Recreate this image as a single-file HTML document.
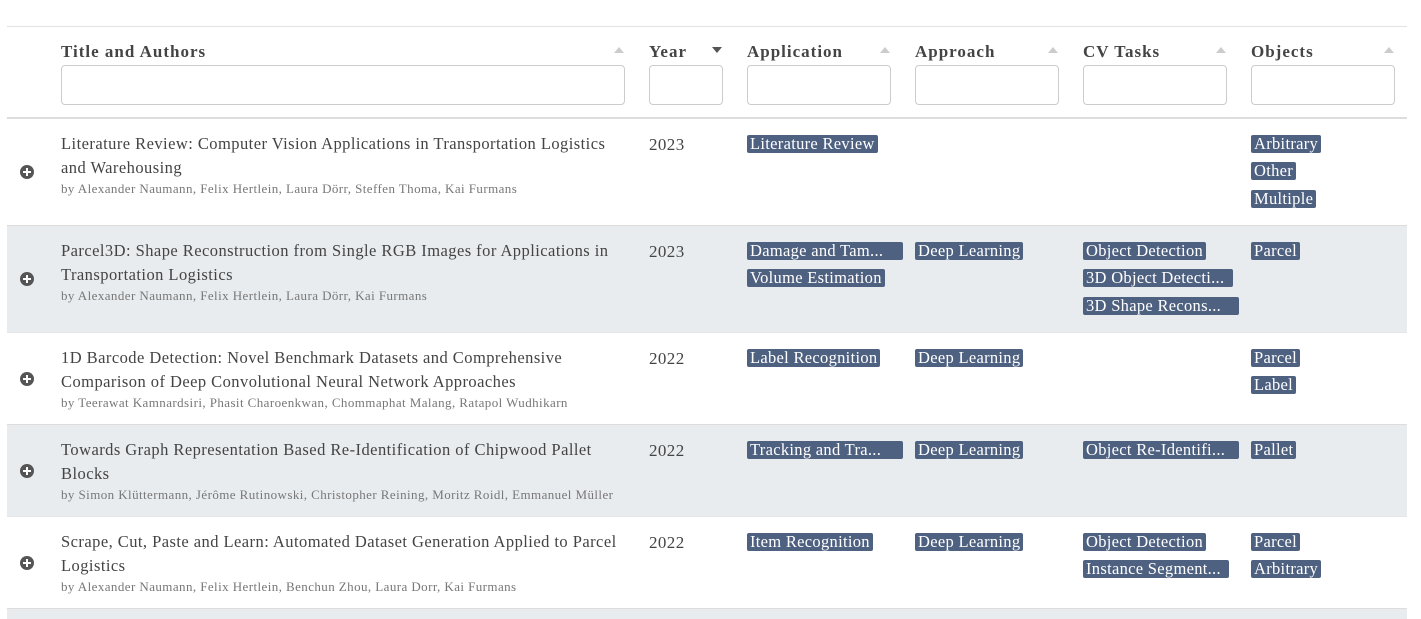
<!DOCTYPE html>
<html><head><meta charset="utf-8"><style>
body{margin:0;width:1421px;height:618px;overflow:hidden;background:#fff;font-family:"Liberation Serif",serif;color:#444;position:relative}
.a{position:absolute;white-space:nowrap}
.hl{position:absolute;left:7px;width:1400px}
.h{font-weight:bold;font-size:17px;letter-spacing:1px;color:#444;top:42px}
.in{position:absolute;top:65px;height:38px;border:1px solid #ccc;border-radius:4px;background:#fff}
.up{position:absolute;top:47px;width:0;height:0;border-left:5px solid transparent;border-right:5px solid transparent;border-bottom:6px solid #ccc}
.dn{position:absolute;top:47px;width:0;height:0;border-left:5px solid transparent;border-right:5px solid transparent;border-top:6px solid #555}
.t{font-size:16.5px;letter-spacing:.45px;color:#444}
.au{font-size:13px;letter-spacing:.42px;color:#777}
.y{font-size:17px;color:#444;letter-spacing:.4px}
.g{position:absolute;height:18px;line-height:18px;background:#4f6180;color:#fff;font-size:16.5px;letter-spacing:.3px;padding:0 3px;border-radius:2px;white-space:nowrap;overflow:hidden;box-sizing:border-box}
.p{position:absolute;left:20px;width:14px;height:14px;border-radius:50%;background:#555}
.p:before{content:"";position:absolute;left:3px;top:6px;width:8px;height:2px;background:#fff}
.p:after{content:"";position:absolute;left:6px;top:3px;width:2px;height:8px;background:#fff}
</style></head><body>
<div class="hl" style="top:26px;height:1px;background:#e3e3e3"></div>
<div class="a h" style="left:61px">Title and Authors</div>
<div class="a h" style="left:649px">Year</div>
<div class="a h" style="left:747px">Application</div>
<div class="a h" style="left:915px">Approach</div>
<div class="a h" style="left:1083px">CV Tasks</div>
<div class="a h" style="left:1251px">Objects</div>
<div class="up" style="left:614px"></div><div class="dn" style="left:712px"></div>
<div class="up" style="left:880px"></div><div class="up" style="left:1048px"></div>
<div class="up" style="left:1216px"></div><div class="up" style="left:1384px"></div>
<div class="in" style="left:61px;width:562px"></div>
<div class="in" style="left:649px;width:72px"></div>
<div class="in" style="left:747px;width:142px"></div>
<div class="in" style="left:915px;width:142px"></div>
<div class="in" style="left:1083px;width:142px"></div>
<div class="in" style="left:1251px;width:142px"></div>
<div class="hl" style="top:117px;height:2px;background:#ddd"></div>

<div class="hl" style="top:225px;height:107px;background:#e9ecef;border-top:1px solid #ddd"></div>
<div class="hl" style="top:424px;height:92px;background:#e9ecef;border-top:1px solid #ddd"></div>
<div class="hl" style="top:608px;height:10px;background:#e9ecef;border-top:1px solid #ddd"></div>
<div class="hl" style="top:332px;height:1px;background:#e6e6e6"></div>
<div class="hl" style="top:516px;height:1px;background:#e6e6e6"></div>

<!-- row1 -->
<div class="p" style="top:165px"></div>
<div class="a t" style="left:61px;top:134px">Literature Review: Computer Vision Applications in Transportation Logistics</div>
<div class="a t" style="left:61px;top:158px">and Warehousing</div>
<div class="a au" style="left:61px;top:181px">by Alexander Naumann, Felix Hertlein, Laura Dörr, Steffen Thoma, Kai Furmans</div>
<div class="a y" style="left:649px;top:135px">2023</div>
<div class="g" style="left:747px;top:135px">Literature Review</div>
<div class="g" style="left:1251px;top:135px">Arbitrary</div>
<div class="g" style="left:1251px;top:162px">Other</div>
<div class="g" style="left:1251px;top:190px">Multiple</div>

<!-- row2 -->
<div class="p" style="top:272px"></div>
<div class="a t" style="left:61px;top:241px">Parcel3D: Shape Reconstruction from Single RGB Images for Applications in</div>
<div class="a t" style="left:61px;top:265px">Transportation Logistics</div>
<div class="a au" style="left:61px;top:288px">by Alexander Naumann, Felix Hertlein, Laura Dörr, Kai Furmans</div>
<div class="a y" style="left:649px;top:242px">2023</div>
<div class="g" style="left:747px;top:242px;width:156px">Damage and Tam...</div>
<div class="g" style="left:747px;top:269px">Volume Estimation</div>
<div class="g" style="left:915px;top:242px">Deep Learning</div>
<div class="g" style="left:1083px;top:242px">Object Detection</div>
<div class="g" style="left:1083px;top:269px;width:150px">3D Object Detecti...</div>
<div class="g" style="left:1083px;top:297px;width:156px">3D Shape Recons...</div>
<div class="g" style="left:1251px;top:242px">Parcel</div>

<!-- row3 -->
<div class="p" style="top:372px"></div>
<div class="a t" style="left:61px;top:348px">1D Barcode Detection: Novel Benchmark Datasets and Comprehensive</div>
<div class="a t" style="left:61px;top:372px">Comparison of Deep Convolutional Neural Network Approaches</div>
<div class="a au" style="left:61px;top:395px">by Teerawat Kamnardsiri, Phasit Charoenkwan, Chommaphat Malang, Ratapol Wudhikarn</div>
<div class="a y" style="left:649px;top:349px">2022</div>
<div class="g" style="left:747px;top:349px">Label Recognition</div>
<div class="g" style="left:915px;top:349px">Deep Learning</div>
<div class="g" style="left:1251px;top:349px">Parcel</div>
<div class="g" style="left:1251px;top:376px">Label</div>

<!-- row4 -->
<div class="p" style="top:464px"></div>
<div class="a t" style="left:61px;top:440px">Towards Graph Representation Based Re-Identification of Chipwood Pallet</div>
<div class="a t" style="left:61px;top:464px">Blocks</div>
<div class="a au" style="left:61px;top:487px">by Simon Klüttermann, Jérôme Rutinowski, Christopher Reining, Moritz Roidl, Emmanuel Müller</div>
<div class="a y" style="left:649px;top:441px">2022</div>
<div class="g" style="left:747px;top:441px;width:156px">Tracking and Tra...</div>
<div class="g" style="left:915px;top:441px">Deep Learning</div>
<div class="g" style="left:1083px;top:441px;width:156px">Object Re-Identifi...</div>
<div class="g" style="left:1251px;top:441px">Pallet</div>

<!-- row5 -->
<div class="p" style="top:556px"></div>
<div class="a t" style="left:61px;top:532px">Scrape, Cut, Paste and Learn: Automated Dataset Generation Applied to Parcel</div>
<div class="a t" style="left:61px;top:556px">Logistics</div>
<div class="a au" style="left:61px;top:579px">by Alexander Naumann, Felix Hertlein, Benchun Zhou, Laura Dorr, Kai Furmans</div>
<div class="a y" style="left:649px;top:533px">2022</div>
<div class="g" style="left:747px;top:533px">Item Recognition</div>
<div class="g" style="left:915px;top:533px">Deep Learning</div>
<div class="g" style="left:1083px;top:533px">Object Detection</div>
<div class="g" style="left:1083px;top:560px;width:146px">Instance Segment...</div>
<div class="g" style="left:1251px;top:533px">Parcel</div>
<div class="g" style="left:1251px;top:560px">Arbitrary</div>
</body></html>
